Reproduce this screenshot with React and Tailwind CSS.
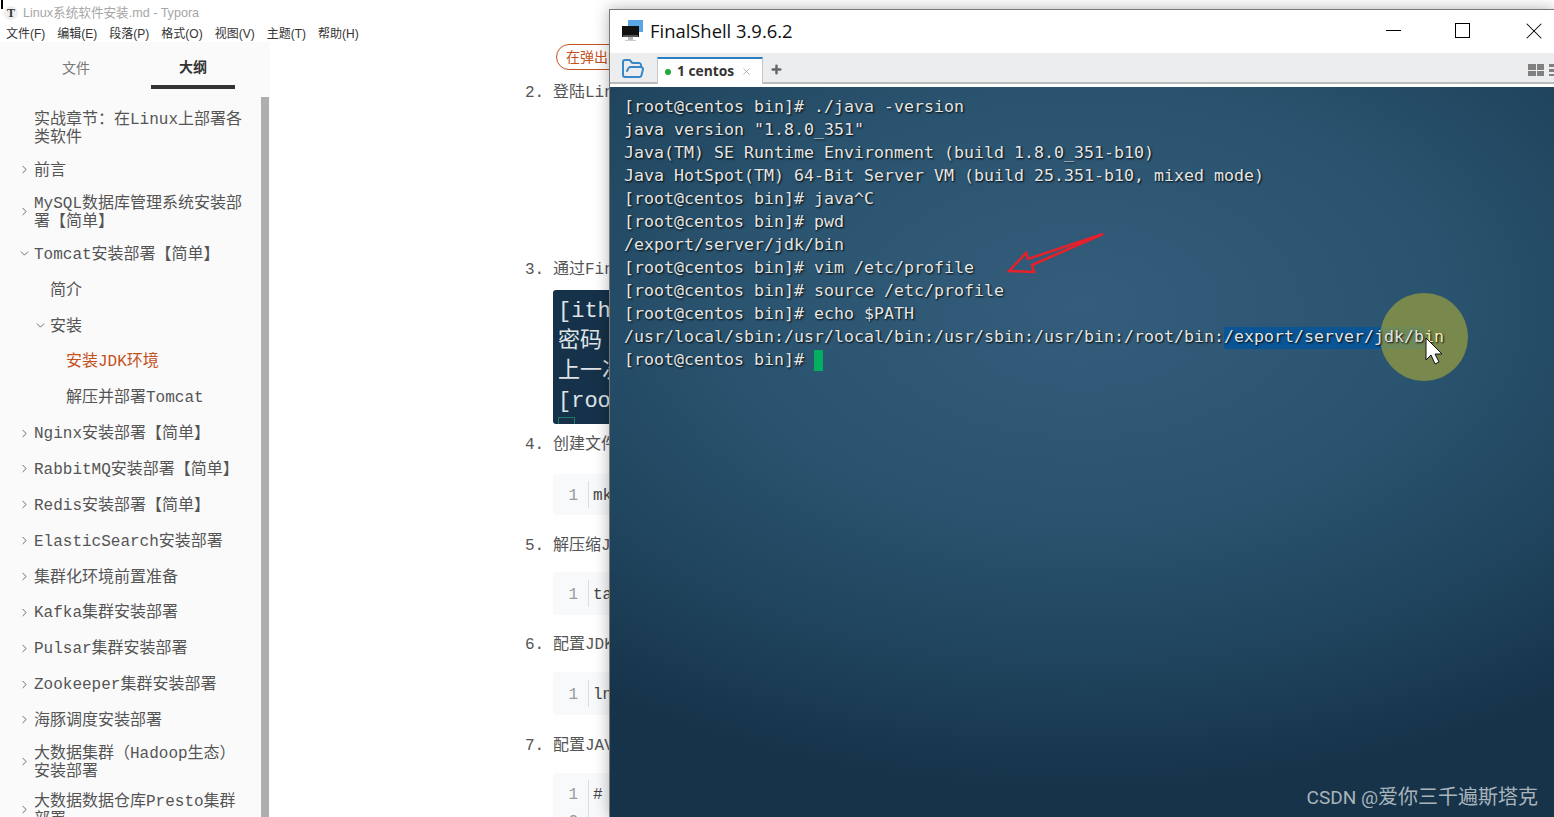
import { ChevronRight, ChevronDown, FolderOpen, Plus, X } from "lucide-react";

const mono = "font-['Liberation_Mono','Noto_Sans_CJK_SC',monospace]";
const cjk = "font-['Liberation_Sans','Noto_Sans_CJK_SC',sans-serif]";

const menus = ["文件(F)", "编辑(E)", "段落(P)", "格式(O)", "视图(V)", "主题(T)", "帮助(H)"];

const outline = [
  { text: "实战章节：在Linux上部署各类软件", level: 0 },
  { text: "前言", level: 0, arrow: "right" },
  { text: "MySQL数据库管理系统安装部署【简单】", level: 0, arrow: "right" },
  { text: "Tomcat安装部署【简单】", level: 0, arrow: "down" },
  { text: "简介", level: 1 },
  { text: "安装", level: 1, arrow: "down" },
  { text: "安装JDK环境", level: 2, active: true },
  { text: "解压并部署Tomcat", level: 2 },
  { text: "Nginx安装部署【简单】", level: 0, arrow: "right" },
  { text: "RabbitMQ安装部署【简单】", level: 0, arrow: "right" },
  { text: "Redis安装部署【简单】", level: 0, arrow: "right" },
  { text: "ElasticSearch安装部署", level: 0, arrow: "right" },
  { text: "集群化环境前置准备", level: 0, arrow: "right" },
  { text: "Kafka集群安装部署", level: 0, arrow: "right" },
  { text: "Pulsar集群安装部署", level: 0, arrow: "right" },
  { text: "Zookeeper集群安装部署", level: 0, arrow: "right" },
  { text: "海豚调度安装部署", level: 0, arrow: "right" },
  { text: "大数据集群（Hadoop生态）安装部署", level: 0, arrow: "right" },
  { text: "大数据数据仓库Presto集群部署", level: 0, arrow: "right" },
];

const indent = ["pl-[16px]", "pl-[32px]", "pl-[48px]"];

const termLines = [
  "[root@centos bin]# ./java -version",
  'java version "1.8.0_351"',
  "Java(TM) SE Runtime Environment (build 1.8.0_351-b10)",
  "Java HotSpot(TM) 64-Bit Server VM (build 25.351-b10, mixed mode)",
  "[root@centos bin]# java^C",
  "[root@centos bin]# pwd",
  "/export/server/jdk/bin",
  "[root@centos bin]# vim /etc/profile",
  "[root@centos bin]# source /etc/profile",
  "[root@centos bin]# echo $PATH",
];

const OutlineRow = ({ item }) => (
  <div className={`flex min-h-[35.86px] items-center py-[6px] ${indent[item.level]}`}>
    <span className="flex w-[16px] shrink-0 justify-center pb-[2px] text-[#555]">
      {item.arrow === "right" && <ChevronRight size={13} strokeWidth={1.6} />}
      {item.arrow === "down" && <ChevronDown size={13} strokeWidth={1.6} />}
    </span>
    <span
      className={`ml-[2px] w-[210px] text-[16px] leading-[18px] ${mono} ${
        item.active ? "text-[#c4511d]" : "text-[#555]"
      }`}
    >
      {item.text}
    </span>
  </div>
);

const Step = ({ n, text, className }) => (
  <div className={`flex h-[24px] items-center pt-[4px] text-[16px] text-[#555] ${mono} ${className}`}>
    <span className="w-[28px] shrink-0">{n}.</span>
    <span className="whitespace-nowrap">{text}</span>
  </div>
);

const CodeBlock = ({ lines, className }) => (
  <div className={`ml-[28px] flex w-[400px] items-stretch rounded-[3px] bg-[#f8f9fa] py-[7px] text-[16px] ${mono} ${className}`}>
    <div className="w-[36px] shrink-0 border-r border-[#ddd] pr-[10px] text-right text-[#999]">
      {lines.map((l, i) => (
        <div key={i} className="h-[27px] leading-[31px]">
          {i + 1}
        </div>
      ))}
    </div>
    <div className="pl-[4px] text-[#444]">
      {lines.map((l, i) => (
        <div key={i} className="h-[27px] leading-[31px]">
          {l}
        </div>
      ))}
    </div>
  </div>
);

const App = () => {
  return (
    <div className={`relative h-[817px] w-[1554px] overflow-hidden bg-white ${cjk}`}>
      <span className="absolute top-0 left-px h-[9px] w-[2px] bg-black" />
      {/* typora */}
      <div className="flex h-[22px] items-center pt-[4px] pl-[4px]">
        <span className="mr-[5px] flex h-[14px] w-[14px] items-center justify-center rounded-full bg-[#efefef] font-['Liberation_Serif',serif] text-[12px] font-bold text-[#333]">
          T
        </span>
        <span className="text-[12.6px] text-[#a6a6a6]">Linux系统软件安装.md - Typora</span>
      </div>
      <div className="flex h-[20px] items-center gap-[12px] pt-[4px] pl-[6px] text-[12px] text-[#333]">
        {menus.map((m) => (
          <span key={m}>{m}</span>
        ))}
      </div>
      <div className="flex h-[775px]">
        <aside className="flex w-[270px] shrink-0 flex-col bg-[#fafafa]">
          <div className="flex h-[47px] shrink-0 gap-[33px] px-[34px] text-[14px]">
            <div className="flex w-[84px] items-center justify-center pt-[5px] text-[#777]">文件</div>
            <div className="flex w-[84px] items-center justify-center border-b-4 border-[#333] pt-[8px] font-bold text-[#333]">
              大纲
            </div>
          </div>
          <div className="flex min-h-0 flex-1">
            <div className="min-w-0 flex-1 overflow-hidden pt-[16px]">
              {outline.map((item) => (
                <OutlineRow key={item.text} item={item} />
              ))}
            </div>
            <div className="mt-[8px] mr-px w-[8px] shrink-0 bg-[#aeaeae]" />
          </div>
        </aside>

        {/* document behind the terminal window */}
        <main className="min-w-0 flex-1 overflow-hidden pl-[255px]">
          <div className="mt-[2px] ml-[31px] flex h-[26px] w-[200px] items-center rounded-[13px] border border-[#c4511d] pl-[9px] text-[14px] text-[#c4511d]">
            在弹出的窗口中
          </div>
          <Step n="2" text="登陆Linux系统" className="mt-[9px]" />
          <Step n="3" text="通过FinalShell上传" className="mt-[153px]" />
          <div className={`mt-[10px] ml-[28px] h-[134px] w-[400px] overflow-hidden rounded-[3px] bg-[#15324a] pt-[7px] pl-[5px] text-[22px] leading-[30px] text-[#dfe3e6] ${mono}`}>
            <div>[itheima</div>
            <div>密码</div>
            <div>上一次登录</div>
            <div>[root</div>
            <div className="h-[10px] w-[17px] border border-[#1f7a66]" />
          </div>
          <Step n="4" text="创建文件夹" className="mt-[7px]" />
          <CodeBlock lines={["mkdir"]} className="mt-[19px]" />
          <Step n="5" text="解压缩JDK" className="mt-[17px]" />
          <CodeBlock lines={["tar"]} className="mt-[16px] py-[8px]" />
          <Step n="6" text="配置JDK" className="mt-[16px]" />
          <CodeBlock lines={["ln"]} className="mt-[17px] py-[8px]" />
          <Step n="7" text="配置JAVA" className="mt-[17px]" />
          <CodeBlock lines={["#", "export"]} className="mt-[17px]" />
        </main>
      </div>

      {/* finalshell window */}
      <div className="absolute top-[9px] right-0 bottom-0 left-[609px] flex flex-col border-t border-l border-[#777] bg-white shadow-[0_0_14px_rgba(0,0,0,0.3)]">
        <div className="flex h-[43px] shrink-0 items-center pb-[2px] pl-[12px] text-black">
          <svg width="21" height="22" viewBox="0 0 21 22" className="mr-[7px]">
            <rect x="6" y="0" width="15" height="12" fill="#5aa5e6" />
            <rect x="0" y="6" width="17" height="11" fill="#111" />
            <rect x="1" y="15" width="15" height="2" fill="#555" />
            <rect x="6" y="17" width="5" height="3" fill="#bbb" />
            <rect x="3" y="20" width="11" height="1" fill="#ccc" />
          </svg>
          <span className="font-['Open_Sans','Liberation_Sans',sans-serif] text-[18.4px] text-[#111]">FinalShell 3.9.6.2</span>
          <div className="ml-auto flex items-center pr-[6px]">
            <span className="h-px w-[15px] bg-black" />
            <span className="ml-[54px] h-[15px] w-[15px] border border-black" />
            <X size={28} strokeWidth={0.9} className="ml-[50px] text-black" />
          </div>
        </div>
        <div className="flex h-[31px] shrink-0 border-b-2 border-[#b9bbbd] bg-[#ecedef]">
          <FolderOpen size={24} strokeWidth={2} className="mt-[4px] ml-[11px] text-[#3a87c8]" />
          <div className="mt-[4px] ml-[12px] flex h-[27px] w-[106px] items-center border-x border-t-2 border-x-[#c4c6c8] border-t-[#2b7fc0] bg-white pl-[7px] font-bold text-[#333]">
            <span className="h-[6px] w-[6px] rounded-full bg-[#1fa83a]" />
            <span className="ml-[6px] font-['Open_Sans',sans-serif] text-[13.8px]">1 centos</span>
            <X size={11} strokeWidth={1.5} className="ml-[7px] text-[#999]" />
          </div>
          <Plus size={13} strokeWidth={4.5} className="mt-[10px] ml-[7px] text-[#666]" />
          <div className="mt-[11px] ml-auto flex gap-[5px]">
            <div className="grid h-[12px] w-[16px] grid-cols-2 gap-px">
              <span className="bg-[#808080]" />
              <span className="bg-[#808080]" />
              <span className="bg-[#808080]" />
              <span className="bg-[#808080]" />
            </div>
            <div className="flex w-[5px] flex-col gap-[2px]">
              <span className="h-[3px] bg-[#808080]" />
              <span className="h-[3px] bg-[#808080]" />
              <span className="h-[2px] bg-[#808080]" />
            </div>
          </div>
        </div>
        <div className="h-[3px] shrink-0 bg-white" />
        <div className="relative min-h-0 flex-1 overflow-hidden bg-[radial-gradient(ellipse_85%_66%_at_50%_30%,#335d7b_0%,#2a536f_45%,#1e425a_78%,#16334a_100%)] pt-[8px] pl-[14px]">
          {/* selection and mouse highlight, under the text */}
          <div className="absolute top-[240px] left-[614px] h-[22px] w-[201px] bg-[#0a5596]" />
          <div className="absolute top-[206px] left-[770px] h-[88px] w-[88px] rounded-full bg-[rgba(155,159,61,0.7)]" />

          <div className="relative font-['DejaVu_Sans_Mono',monospace] text-[16.62px] leading-[23px] whitespace-pre text-[#e4e6e6] [text-shadow:1px_1px_2px_#000]">
            {termLines.map((l, i) => (
              <div key={i}>{l}</div>
            ))}
            <div>
              /usr/local/sbin:/usr/local/bin:/usr/sbin:/usr/bin:/root/bin:/export/server/jdk/b
              <span className="text-[#f0efb0]">in</span>
            </div>
            <div className="flex">
              [root@centos bin]# <span className="mt-[2px] h-[21px] w-[9px] bg-[#00b060]" />
            </div>
          </div>

          <svg width="22" height="30" viewBox="0 0 22 30" className="absolute top-[250px] left-[814px]">
            <path d="M2 1 L2 23 L7 18 L11 27 L15 25 L11 17 L18 17 Z" fill="#fff" stroke="#111" strokeWidth="1" />
          </svg>

          {/* red arrow */}
          <svg width="104" height="50" viewBox="0 0 104 50" className="absolute top-[143px] left-[395px]">
            <path d="M4 41 L21 23 L23 29 L98 4 L27 35 L29 42 Z" fill="none" stroke="#e8202a" strokeWidth="2.5" />
          </svg>

          <div className="absolute right-[16px] bottom-[5px] font-['Roboto','Noto_Sans_CJK_SC',sans-serif] text-[20px] text-[#a9b3ba]">
            <span className="text-[19px]">CSDN @</span>爱你三千遍斯塔克
          </div>
        </div>
      </div>
    </div>
  );
};

export default App;
